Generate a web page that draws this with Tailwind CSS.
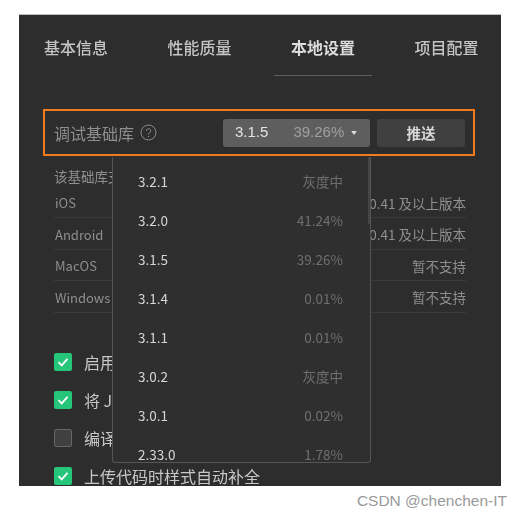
<!doctype html>
<html lang="en">

<head>
    <meta charset="UTF-8" />
    <title>本地设置</title>
    <script src="https://cdn.jsdelivr.net/npm/@tailwindcss/browser@4"></script>
</head>

<body class="bg-white font-['Noto_Sans_CJK_SC','Noto_Sans',sans-serif]">
    <div class="w-[523px] h-[517px] overflow-hidden pt-[14px]">
        <div class="relative ml-[19px] w-[482px] h-[472px] overflow-hidden bg-[#2d2d2d] border-t border-[#bdbdbd] blur-[0.5px]">
            <!-- tabs -->
            <div class="flex gap-[59.5px] pl-[25px] pt-[20px] text-[16px] leading-[24px] font-medium text-[#c4c4c4]">
                <div class="w-[64px] whitespace-nowrap">基本信息</div>
                <div class="w-[64px] whitespace-nowrap">性能质量</div>
                <div class="w-[64px] flex flex-col items-center whitespace-nowrap font-bold text-[#dcdcdc]">
                    本地设置
                    <div class="w-[98px] h-px shrink-0 mt-[16px] bg-[#5c5c5c]"></div>
                </div>
                <div class="w-[64px] whitespace-nowrap">项目配置</div>
            </div>

            <!-- highlighted row -->
            <div class="mt-[33px] ml-[24px] w-[432px] h-[47px] border-2 border-[#f27a1f] flex items-center pl-[9px] pr-[8px]">
                <span class="text-[16px] text-[#8e8e8e] whitespace-nowrap">调试基础库</span>
                <svg class="ml-[6px] w-[17px] h-[17px]" viewBox="0 0 17 17" fill="none" stroke="#8e8e8e">
                    <circle cx="8.5" cy="8.5" r="7.5" />
                    <path d="M6.4 6.8a2.1 2.1 0 1 1 3.3 1.7c-.8.5-1.2 1-1.2 2" />
                    <path d="M8.5 12v1.2" />
                </svg>
                <div class="ml-auto w-[147px] h-[28px] rounded-[3px] bg-[#5e5e5e] flex items-center pl-[12px] text-[15px]">
                    <span class="text-[#e4e4e4] font-['Liberation_Sans']">3.1.5</span>
                    <span class="ml-[25px] text-[#a0a0a0] font-['Liberation_Sans']">39.26%</span>
                    <svg class="ml-[7px] w-[6px] h-[4px]" viewBox="0 0 7 5" fill="#e0e0e0"><path d="M0 0h7L3.5 5z" /></svg>
                </div>
                <div class="ml-[7px] w-[88px] h-[28px] rounded-[3px] bg-[#404040] flex items-center justify-center text-[14.5px] font-bold text-[#d8d8d8]">推送</div>
            </div>

            <!-- base library table -->
            <div class="ml-[35px] w-[412px] mt-[10px] text-[13.5px] text-[#8f8f8f]">
                <div class="h-[20px] leading-[20px] whitespace-nowrap">该基础库支持</div>
                <div class="h-[32px] flex items-center justify-between border-b border-[#3a3a3a] pt-[3px]"><span class="text-[13px] ml-px">iOS</span><span>微信 8.0.41 及以上版本</span></div>
                <div class="h-[31.5px] flex items-center justify-between border-b border-[#3a3a3a] pt-[2px]"><span class="text-[13px] ml-px">Android</span><span>微信 8.0.41 及以上版本</span></div>
                <div class="h-[31.5px] flex items-center justify-between border-b border-[#3a3a3a] pt-[2px]"><span class="text-[13px] ml-px">MacOS</span><span>暂不支持</span></div>
                <div class="h-[31.5px] flex items-center justify-between border-b border-[#3a3a3a] pt-[2px]"><span class="text-[13px] ml-px">Windows</span><span>暂不支持</span></div>
            </div>

            <!-- checkboxes -->
            <div class="ml-[35px] mt-[40px] flex flex-col gap-[20px] text-[16px] leading-[18px] text-[#c8c8c8]">
                <div class="flex items-center gap-[12px]">
                    <svg class="w-[18px] h-[18px] shrink-0" viewBox="0 0 18 18"><rect width="18" height="18" rx="2" fill="#25c67a" /><path d="M4.5 9.2l3.2 3.2 5.8-6.6" fill="none" stroke="#fff" stroke-width="1.8" /></svg>
                    <span class="whitespace-nowrap">启用代码保护</span>
                </div>
                <div class="flex items-center gap-[12px]">
                    <svg class="w-[18px] h-[18px] shrink-0" viewBox="0 0 18 18"><rect width="18" height="18" rx="2" fill="#25c67a" /><path d="M4.5 9.2l3.2 3.2 5.8-6.6" fill="none" stroke="#fff" stroke-width="1.8" /></svg>
                    <span class="whitespace-nowrap">将 JS 编译成 ES5</span>
                </div>
                <div class="flex items-center gap-[12px]">
                    <div class="w-[18px] h-[18px] shrink-0 rounded-[2px] bg-[#404040] border border-[#666]"></div>
                    <span class="whitespace-nowrap">编译时自动补全</span>
                </div>
                <div class="flex items-center gap-[12px]">
                    <svg class="w-[18px] h-[18px] shrink-0" viewBox="0 0 18 18"><rect width="18" height="18" rx="2" fill="#25c67a" /><path d="M4.5 9.2l3.2 3.2 5.8-6.6" fill="none" stroke="#fff" stroke-width="1.8" /></svg>
                    <span class="whitespace-nowrap">上传代码时样式自动补全</span>
                </div>
            </div>

            <!-- version dropdown -->
            <div class="absolute left-[93px] top-[142px] w-[259px] h-[306px] overflow-hidden rounded-b-[3px] bg-[#2f2f2f] border border-t-0 border-[#555] text-[13.5px] leading-[18px]">
                <div class="absolute right-0 top-0 w-[2px] h-[67px] bg-[#454545]"></div>
                <div class="pt-[15px] pl-[25px] pr-[27px] flex flex-col gap-[21px]">
                    <div class="flex justify-between"><span class="text-[#d6d6d6]">3.2.1</span><span class="text-[#6f6f6f]">灰度中</span></div>
                    <div class="flex justify-between"><span class="text-[#d6d6d6]">3.2.0</span><span class="text-[#6f6f6f]">41.24%</span></div>
                    <div class="flex justify-between"><span class="text-[#d6d6d6]">3.1.5</span><span class="text-[#6f6f6f]">39.26%</span></div>
                    <div class="flex justify-between"><span class="text-[#d6d6d6]">3.1.4</span><span class="text-[#6f6f6f]">0.01%</span></div>
                    <div class="flex justify-between"><span class="text-[#d6d6d6]">3.1.1</span><span class="text-[#6f6f6f]">0.01%</span></div>
                    <div class="flex justify-between"><span class="text-[#d6d6d6]">3.0.2</span><span class="text-[#6f6f6f]">灰度中</span></div>
                    <div class="flex justify-between"><span class="text-[#d6d6d6]">3.0.1</span><span class="text-[#6f6f6f]">0.02%</span></div>
                    <div class="flex justify-between"><span class="text-[#d6d6d6]">2.33.0</span><span class="text-[#6f6f6f]">1.78%</span></div>
                </div>
            </div>
        </div>
        <div class="mt-[5px] pr-[16px] text-right text-[15.5px] leading-[20px] text-[#9a9a9a] font-['Liberation_Sans']">CSDN @chenchen-IT</div>
    </div>
</body>

</html>
